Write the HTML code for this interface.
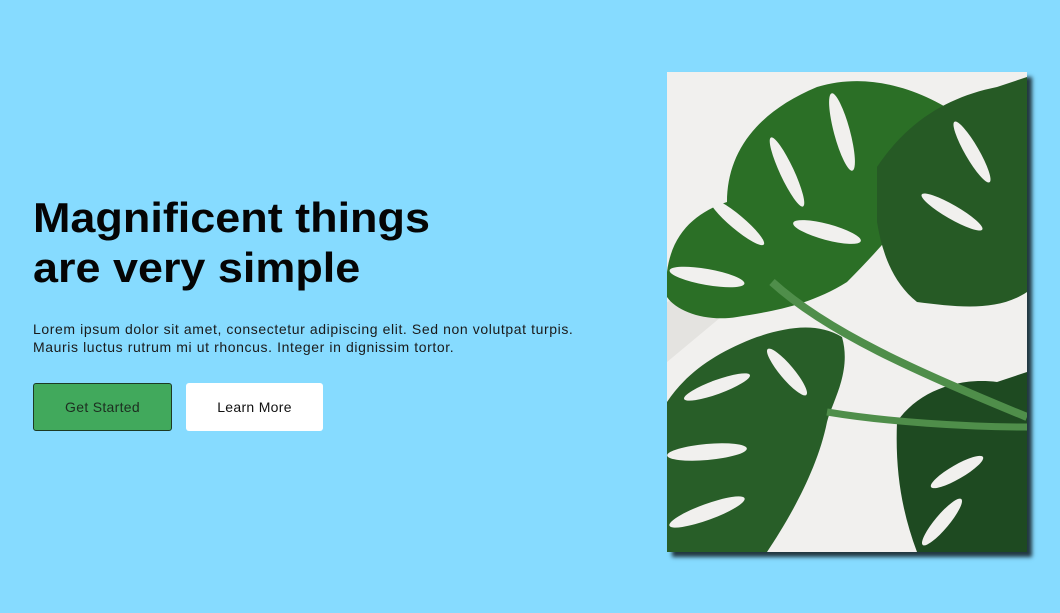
<!DOCTYPE html>
<html><head><style>
html,body{margin:0;padding:0}
body{width:1060px;height:613px;background:#86dbff;font-family:"Liberation Sans",sans-serif;position:relative;overflow:hidden}
h1{position:absolute;left:33px;top:193px;margin:0;font-size:42px;line-height:50px;font-weight:bold;color:#050505;transform:scaleX(1.07);transform-origin:left top;white-space:nowrap}
p{position:absolute;left:33px;top:320px;margin:0;font-size:14px;line-height:18px;color:#1a1a1a;letter-spacing:0.6px;white-space:nowrap}
.b{position:absolute;top:383px;height:48px;box-sizing:border-box;font-size:14px;display:flex;align-items:center;justify-content:center;border-radius:3px;color:#111;letter-spacing:0.3px}
.g{left:33px;width:139px;background:#41a95c;border:1px solid #1c3a24;color:#1d2e20}
.w{left:186px;width:137px;background:#fff}
.img{position:absolute;left:667px;top:72px;width:360px;height:480px;background:#f1f0ee;box-shadow:5px 5px 4px rgba(0,0,0,.75);overflow:hidden}
</style></head><body>
<h1>Magnificent things<br>are very simple</h1>
<p>Lorem ipsum dolor sit amet, consectetur adipiscing elit. Sed non volutpat turpis.<br>Mauris luctus rutrum mi ut rhoncus. Integer in dignissim tortor.</p>
<div class="b g">Get Started</div>
<div class="b w">Learn More</div>
<div class="img">
<svg width="360" height="480" viewBox="0 0 360 480">
<polygon points="0,230 40,215 60,240 0,290" fill="#e4e3e0"/>
<g>
<path d="M0,200 C5,160 30,140 60,130 C60,80 90,40 150,15 C200,0 250,15 295,45 C270,110 230,160 180,210 C140,235 100,240 70,245 C40,250 10,240 0,225 Z" fill="#2b6f26"/>
<path d="M210,95 C240,50 280,25 330,15 L360,5 L360,220 C330,240 290,235 250,230 C225,210 215,180 210,150 Z" fill="#265a25"/>
<path d="M0,330 C20,300 50,280 90,265 C120,255 150,250 175,265 C185,300 165,330 160,350 C150,400 120,450 100,480 L0,480 Z" fill="#285e28"/>
<path d="M230,350 C250,320 290,305 330,310 L360,300 L360,480 L250,480 C235,440 228,400 230,350 Z" fill="#1e4a21"/>
</g>
<g fill="#f1f0ee">
<ellipse cx="40" cy="205" rx="38" ry="8" transform="rotate(10 40 205)"/>
<ellipse cx="70" cy="150" rx="35" ry="7" transform="rotate(40 70 150)"/>
<ellipse cx="120" cy="100" rx="38" ry="7" transform="rotate(65 120 100)"/>
<ellipse cx="175" cy="60" rx="40" ry="8" transform="rotate(75 175 60)"/>
<ellipse cx="160" cy="160" rx="35" ry="8" transform="rotate(15 160 160)"/>
<ellipse cx="305" cy="80" rx="35" ry="7" transform="rotate(60 305 80)"/>
<ellipse cx="285" cy="140" rx="35" ry="7" transform="rotate(30 285 140)"/>
<ellipse cx="50" cy="315" rx="35" ry="7" transform="rotate(-20 50 315)"/>
<ellipse cx="40" cy="380" rx="40" ry="8" transform="rotate(-5 40 380)"/>
<ellipse cx="40" cy="440" rx="40" ry="8" transform="rotate(-20 40 440)"/>
<ellipse cx="120" cy="300" rx="30" ry="7" transform="rotate(50 120 300)"/>
<ellipse cx="290" cy="400" rx="30" ry="7" transform="rotate(-30 290 400)"/>
<ellipse cx="275" cy="450" rx="30" ry="7" transform="rotate(-50 275 450)"/>
</g>
<path d="M105,210 C160,260 250,300 360,345" stroke="#4f8e4a" stroke-width="8" fill="none"/>
<path d="M160,340 C220,350 300,355 360,355" stroke="#4f8e4a" stroke-width="7" fill="none"/>
</svg>
</div>
</body></html>
